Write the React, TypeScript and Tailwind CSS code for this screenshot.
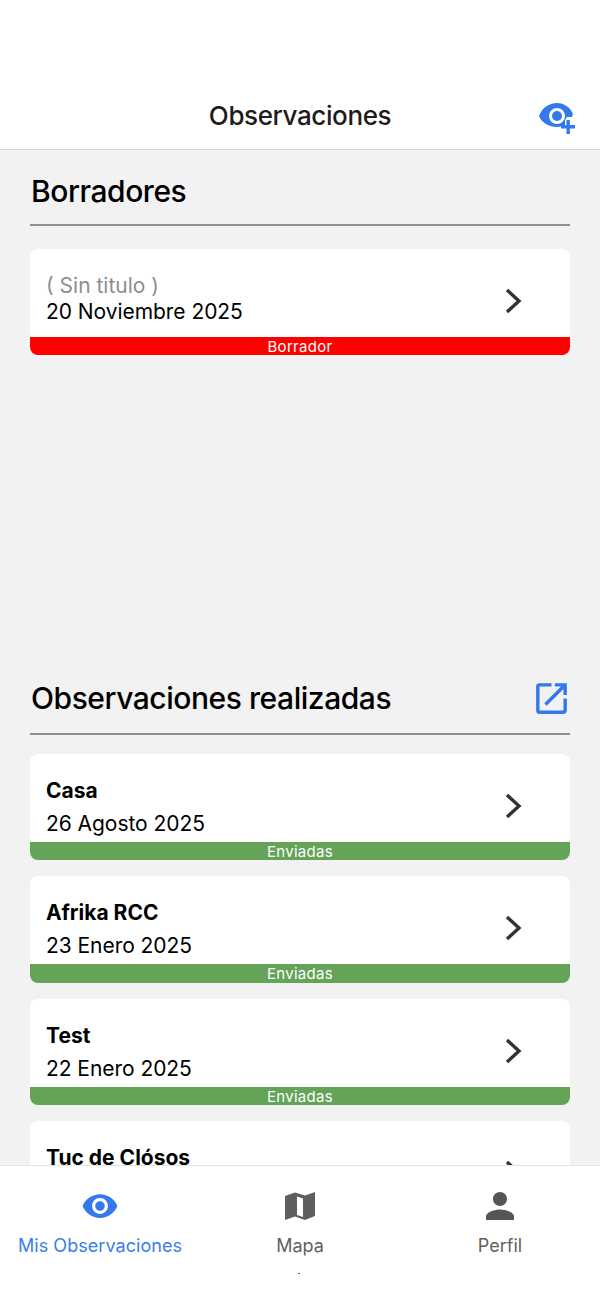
import { MdOpenInNew, MdPerson, MdVisibility } from 'react-icons/md'

interface Observation {
  title: string
  date: string
}

const sent: Observation[] = [
  { title: 'Casa', date: '26 Agosto 2025' },
  { title: 'Afrika RCC', date: '23 Enero 2025' },
  { title: 'Test', date: '22 Enero 2025' },
  { title: 'Tuc de Clósos', date: '15 Enero 2025' },
]

function Chevron() {
  return (
    <svg className="absolute right-[48px] top-[39px] h-[26px] w-[18px]" viewBox="0 0 18 26" fill="none">
      <path d="M3 2l12 11L3 24" stroke="#333" strokeWidth="3.4" />
    </svg>
  )
}

function EyePlus() {
  return (
    <svg className="h-[34px] w-[36px]" viewBox="0 0 36 34">
      <path
        fill="#3478f0"
        fillRule="evenodd"
        d="M0 16C3 8 10 3 18 3c7 0 13 4 16 11l-1 3h-5l-2 3v5c-2 1-5 2-8 2C10 27 3 23 0 16zm18-8a8 8 0 1 0 0 16 8 8 0 0 0 0-16z"
      />
      <circle cx="18" cy="16" r="5" fill="#3478f0" />
      <path fill="#3478f0" d="M27.500 20h3.400v5H36v3.400h-5.100V34h-3.400v-5.600H22V25h5.500z" />
    </svg>
  )
}

function MapIcon() {
  return (
    <svg className="h-[29px] w-[30px]" viewBox="0 0 30 29">
      <path
        fill="#5f5f5f"
        fillRule="evenodd"
        d="M0 4l10-3.500 10 3L30 0v24l-10 4-10-3.500L0 28zM12 4.500v18.500l6 2V6.500z"
      />
    </svg>
  )
}

function SectionTitle({ children }: { children: React.ReactNode }) {
  return <h2 className="pl-px text-[30px] font-medium leading-[40px] tracking-[-0.45px] text-black">{children}</h2>
}

function Card({ title, date, status, draft }: { title: string; date: string; status: string; draft?: boolean }) {
  return (
    <div className="relative overflow-hidden rounded-[8px] bg-white">
      <div className={draft ? 'h-[88px] pl-[16px] pt-[24px]' : 'h-[88px] pl-[16px] pt-[20px]'}>
        {draft ? (
          <p className="text-[21px] leading-[26px] text-[#8e8e8e]">{title}</p>
        ) : (
          <p className="text-[21px] font-bold leading-[34px] text-black">{title}</p>
        )}
        <p className={draft ? 'text-[21px] leading-[26px] tracking-[-0.05px] text-black' : 'mt-[3px] text-[21px] leading-[26px] tracking-[-0.05px] text-black'}>
          {date}
        </p>
      </div>
      <Chevron />
      <div
        className={
          draft
            ? 'h-[18.4px] bg-[#fe0000] text-center text-[15px] leading-[20px] tracking-[0.3px] text-white'
            : 'h-[18.4px] bg-[#64a358] text-center text-[15px] leading-[20px] tracking-[0.3px] text-white'
        }
      >
        {status}
      </div>
    </div>
  )
}

export default function App() {
  return (
    <div className="relative flex h-[1299px] w-[600px] flex-col overflow-hidden bg-[#f2f2f2] font-['Inter',sans-serif]">
      <header className="relative h-[150px] shrink-0 border-b border-[#d8d8d8] bg-white">
        <h1 className="pt-[99px] text-center text-[26px] font-medium leading-[34px] tracking-[-0.4px] text-[#1c1c1e]">
          Observaciones
        </h1>
        <div className="absolute right-[25px] top-[100px]">
          <EyePlus />
        </div>
      </header>

      <main className="px-[30px]">
        <section className="h-[511px] pt-[21px]">
          <SectionTitle>Borradores</SectionTitle>
          <div className="mt-[13px] h-[2px] bg-[#8f8f8f]" />
          <div className="mt-[23px]">
            <Card title="( Sin titulo )" date="20 Noviembre 2025" status="Borrador" draft />
          </div>
        </section>

        <section className="pt-[17px]">
          <div className="flex h-[40px] items-center justify-between">
            <SectionTitle>Observaciones realizadas</SectionTitle>
            <MdOpenInNew className="mr-[-2px] shrink-0 text-[41px] text-[#3478f0]" />
          </div>
          <div className="mt-[15px] h-[2px] bg-[#8f8f8f]" />
          <div className="mt-[19px] flex flex-col gap-[16px]">
            {sent.map((item) => (
              <Card key={item.title} title={item.title} date={item.date} status="Enviadas" />
            ))}
          </div>
        </section>
      </main>

      <nav className="absolute bottom-0 left-0 right-0 grid h-[134px] grid-cols-3 border-t border-[#e4e4e4] bg-white">
        <div className="flex flex-col items-center pt-[23px] text-[#3a80e8]">
          <div className="flex h-[34px] items-center">
            <MdVisibility className="text-[38px] text-[#3478f0]" />
          </div>
          <span className="mt-[11px] text-[18px] leading-[24px] tracking-[0.05px]">Mis Observaciones</span>
        </div>
        <div className="flex flex-col items-center pt-[23px] text-[#5f5f5f]">
          <div className="flex h-[34px] items-center">
            <MapIcon />
          </div>
          <span className="mt-[11px] text-[18px] leading-[24px]">Mapa</span>
        </div>
        <div className="flex flex-col items-center pt-[23px] text-[#5f5f5f]">
          <div className="flex h-[34px] items-center">
            <MdPerson className="text-[42px] text-[#555]" />
          </div>
          <span className="mt-[11px] text-[18px] leading-[24px]">Perfil</span>
        </div>
        <span className="absolute left-[298px] top-[107px] h-[1px] w-[2px] bg-[#666]" />
      </nav>
    </div>
  )
}
